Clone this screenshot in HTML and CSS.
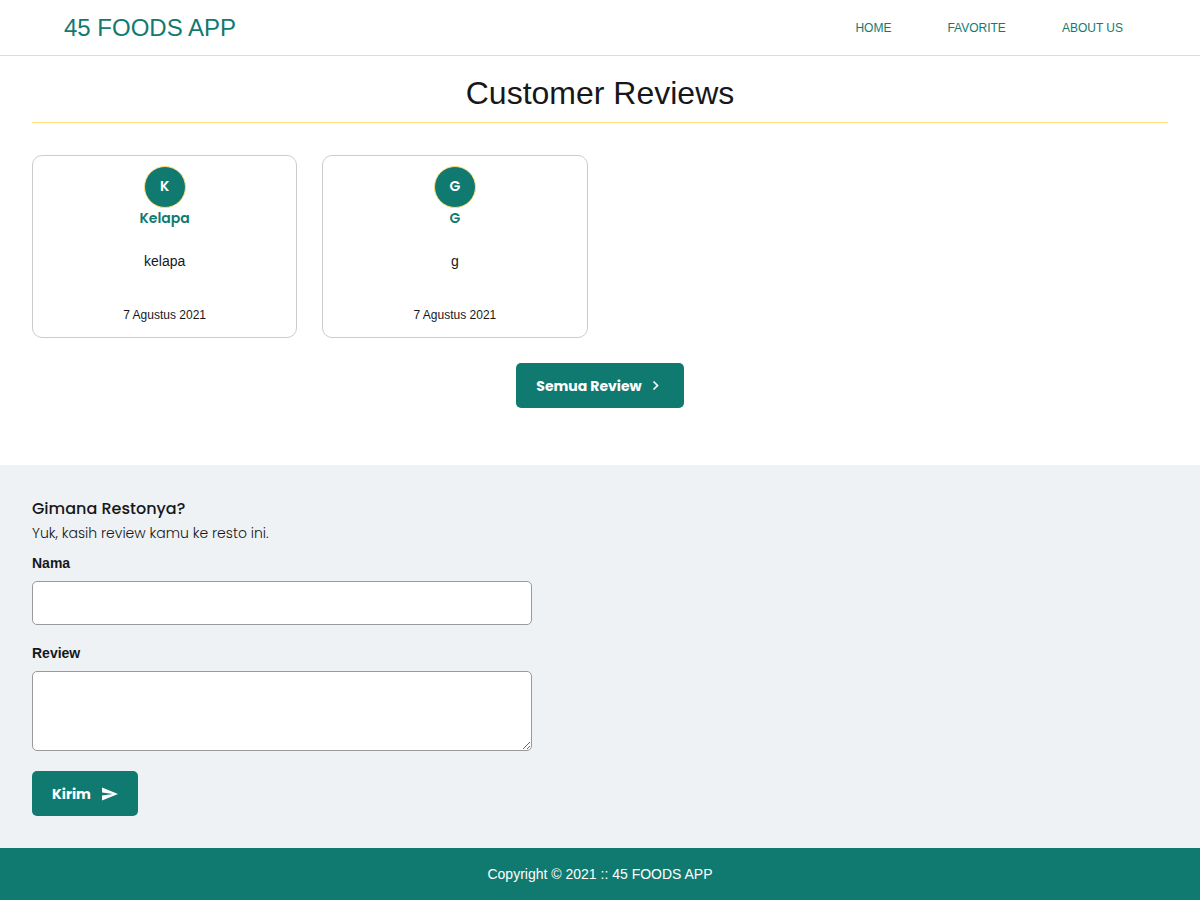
FILE: index.html
```html
<!DOCTYPE html>
<html lang="id">
<head>
<meta charset="utf-8">
<meta name="viewport" content="width=device-width, initial-scale=1">
<title>45 FOODS APP</title>
<link rel="stylesheet" href="styles.css">
</head>
<body>
<header class="header">
  <a class="brand" href="#">45 FOODS APP</a>
  <nav class="nav">
    <a href="#">HOME</a>
    <a href="#">FAVORITE</a>
    <a href="#">ABOUT US</a>
  </nav>
</header>
<main class="main">
  <section class="reviews">
    <h1 class="reviews-title">Customer Reviews</h1>
    <div class="review-list">
      <article class="card">
        <div class="avatar">K</div>
        <h2 class="card-name">Kelapa</h2>
        <p class="card-text">kelapa</p>
        <p class="card-date">7 Agustus 2021</p>
      </article>
      <article class="card">
        <div class="avatar">G</div>
        <h2 class="card-name">G</h2>
        <p class="card-text">g</p>
        <p class="card-date">7 Agustus 2021</p>
      </article>
    </div>
    <button class="button button-all" type="button">Semua Review
      <svg width="24" height="24" viewBox="0 0 24 24" aria-hidden="true"><path d="M9.500 7.500l4 4-4 4" fill="none" stroke="currentColor" stroke-width="1.700"/></svg>
    </button>
  </section>
  <section class="feedback">
    <h2 class="feedback-title">Gimana Restonya?</h2>
    <p class="feedback-lead">Yuk, kasih review kamu ke resto ini.</p>
    <form class="form">
      <label for="name">Nama</label>
      <input class="field" id="name" type="text">
      <label for="review">Review</label>
      <textarea class="field field-area" id="review"></textarea>
      <button class="button button-send" type="button">Kirim
        <svg width="17" height="16" viewBox="0 0 17 16" aria-hidden="true"><path d="M1 1.500l16 6.500L1 14.500V9.500L12 8 1 6.500z" fill="currentColor"/></svg>
      </button>
    </form>
  </section>
</main>
<footer class="footer">Copyright © 2021 :: 45 FOODS APP</footer>
</body>
</html>
```
FILE: styles.css
```css
:root {
  --green: #117a70;
  --yellow: #ffdd7a;
  --ink: #17171a;
  --display: Poppins, Inter, sans-serif;
}
* { box-sizing: border-box; }
body {
  margin: 0;
  min-height: 100vh;
  display: flex;
  flex-direction: column;
  background: #fff;
  color: var(--ink);
  font: 14px/20px "Liberation Sans", Arial, sans-serif;
}
h1, h2, p { margin: 0; }
.header {
  display: flex;
  align-items: center;
  justify-content: space-between;
  min-height: 56px;
  padding: 0 49px 0 64px;
  border-bottom: 1px solid var(--yellow);
}
.header a { color: var(--green); text-decoration: none; }
.brand { font-size: 24px; line-height: 32px; }
.nav { display: flex; font-size: 12px; }
.nav a { padding: 8px 28px; }
.main { flex: 1; display: flex; flex-direction: column; }
.reviews {
  display: flex;
  flex-direction: column;
  padding: 17px 32px 57px;
}
.reviews-title {
  padding-bottom: 9px;
  border-bottom: 1px solid var(--yellow);
  font-size: 32px;
  line-height: 40px;
  font-weight: 400;
  text-align: center;
}
.review-list {
  display: grid;
  grid-template-columns: repeat(4, 1fr);
  gap: 25px;
  padding: 32px 0 25px;
}
.card {
  display: flex;
  flex-direction: column;
  align-items: center;
  padding: 10px 10px 12px;
  border: 1px solid #ccc;
  border-radius: 10px;
}
.avatar {
  width: 42px;
  height: 42px;
  border: 1px solid var(--yellow);
  border-radius: 50%;
  background: var(--green);
  color: #fff;
  font: 600 14px/38px var(--display);
  text-align: center;
}
.card-name { color: var(--green); font: 600 14px/20px var(--display); }
.card-text { padding: 23px 0 34px; }
.card-date { font-size: 12px; }
.button {
  display: inline-flex;
  align-items: center;
  height: 45px;
  padding: 0 20px;
  border: 0;
  border-radius: 5px;
  background: var(--green);
  color: #fff;
  font: 700 14px/20px var(--display);
}
.button-all { align-self: center; gap: 2px; padding-right: 16px; }
.button-send { gap: 10px; }
.feedback {
  flex: 1;
  padding: 32px;
  background: #eef2f5;
}
.feedback-title { font: 500 16px/24px var(--display); }
.feedback-lead { font: 300 14px/24px var(--display); }
.form {
  display: flex;
  flex-direction: column;
  align-items: flex-start;
  max-width: 500px;
  padding-top: 8px;
}
.form label { font-weight: 700; margin-bottom: 8px; }
.field {
  width: 100%;
  height: 44px;
  margin-bottom: 18px;
  padding: 10px;
  border: 1px solid #999;
  border-radius: 5px;
  background: #fff;
  font: inherit;
}
.field-area { height: 80px; margin-bottom: 20px; resize: both; }
.footer {
  padding: 16px;
  background: var(--green);
  color: #fff;
  text-align: center;
}
```
